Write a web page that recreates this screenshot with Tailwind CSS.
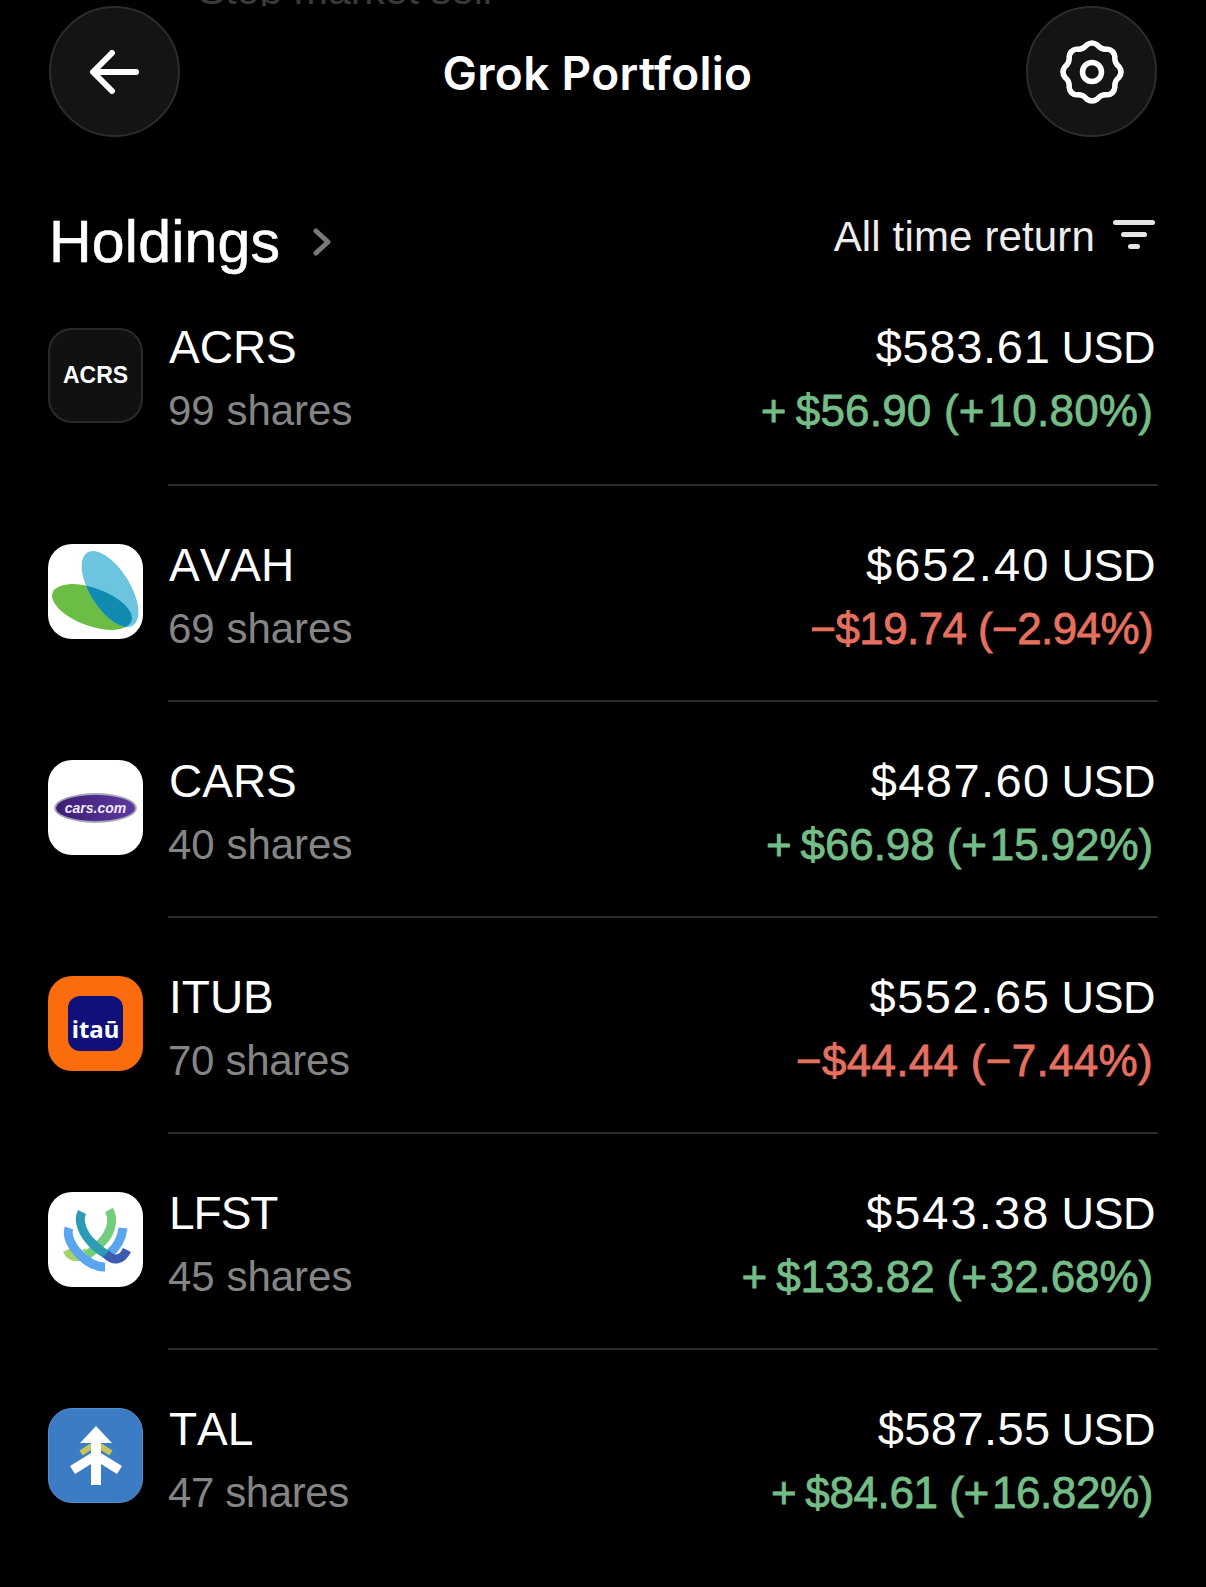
<!DOCTYPE html>
<html lang="en">
<head>
    <meta charset="UTF-8" />
    <title>Grok Portfolio</title>
    <script src="https://cdn.jsdelivr.net/npm/@tailwindcss/browser@4"></script>
</head>
<body class="bg-black text-white font-['Liberation_Sans',sans-serif] w-[1206px] h-[1587px] overflow-hidden">

    <!-- Clipped row from the page behind -->
    <div class="h-[6px] overflow-hidden pl-[198px]">
        <p class="text-[41px] leading-[41px] -mt-[30px] text-[#3a3a3a]">Stop market sell</p>
    </div>

    <!-- Header -->
    <header class="flex items-center justify-between pl-[49px] pr-[49px]">
        <button class="w-[131px] h-[131px] rounded-full bg-[#141414] border-2 border-[#2c2c2c] flex items-center justify-center">
            <svg width="52" height="44" viewBox="0 0 52 44" fill="none" stroke="white" stroke-width="6" stroke-linecap="round" stroke-linejoin="round">
                <path d="M47 22H5M23 3 4 22l19 19"/>
            </svg>
        </button>
        <h1 class="font-['Inter',sans-serif] font-semibold text-[46px] tracking-[0.3px] mr-[11px] mt-[4px]">Grok Portfolio</h1>
        <button class="w-[131px] h-[131px] rounded-full bg-[#141414] border-2 border-[#2c2c2c] flex items-center justify-center">
            <svg width="64" height="64" viewBox="0 0 64 64" fill="none" stroke="white" stroke-width="5.5" stroke-linejoin="round">
                <path d="M26.64 5.03Q32 1 37.36 5.03Q41.19 9.82 47.29 9.15Q53.92 10.08 54.85 16.71Q54.18 22.81 58.97 26.64Q63 32 58.97 37.36Q54.18 41.19 54.85 47.29Q53.92 53.92 47.29 54.85Q41.19 54.18 37.36 58.97Q32 63 26.64 58.97Q22.81 54.18 16.71 54.85Q10.08 53.92 9.15 47.29Q9.82 41.19 5.03 37.36Q1 32 5.03 26.64Q9.82 22.81 9.15 16.71Q10.08 10.08 16.71 9.15Q22.81 9.82 26.64 5.03Z"/>
                <circle cx="32" cy="32" r="9.5"/>
            </svg>
        </button>
    </header>

    <!-- Holdings heading -->
    <section class="flex items-center justify-between pl-[49px] pr-[51px] mt-[69px] h-[72px]">
        <div class="flex items-center gap-[32px]">
            <h2 class="text-[59px] leading-[72px] tracking-[0.2px] [-webkit-text-stroke:0.6px_white]">Holdings</h2>
            <svg width="20" height="30" viewBox="0 0 20 30" fill="none" stroke="#7a7a7a" stroke-width="5" stroke-linecap="round" stroke-linejoin="round">
                <path d="m4 4 12 11L4 26"/>
            </svg>
        </div>
        <div class="flex items-center gap-[18px] -mt-[10px]">
            <span class="text-[42px] leading-[48px] tracking-[0.15px] text-[#ededed]">All time return</span>
            <div class="flex flex-col items-center gap-[7px] w-[42px] -mt-[6px]">
                <span class="w-[42px] h-[5px] rounded-full bg-[#e5e5e5]"></span>
                <span class="w-[26px] h-[5px] rounded-full bg-[#e5e5e5]"></span>
                <span class="w-[12px] h-[5px] rounded-full bg-[#e5e5e5]"></span>
            </div>
        </div>
    </section>

    <!-- Holdings list -->
    <main class="pl-[48px] pr-[48px] mt-[-8px]">

        <div class="flex gap-[25px] h-[216px] pt-[58px]">
            <div class="w-[95px] h-[95px] shrink-0 rounded-[24px] bg-[#111111] border-2 border-[#2a2a2a] flex items-center justify-center">
                <span class="text-[23px] font-bold">ACRS</span>
            </div>
            <div class="flex-1 flex justify-between border-b-2 border-[#2a2a2a] pr-[3px]">
                <div>
                    <p class="text-[46px] leading-[46px] mt-[-4px] ml-[1px]">ACRS</p>
                    <p class="text-[42px] leading-[42px] mt-[20px] text-[#858585]">99 shares</p>
                </div>
                <div class="text-right">
                    <p class="text-[47px] leading-[46px] mt-[-4px]"><span class="tracking-[0.7px]">$583.61</span><span class="text-[45px] tracking-[-0.5px] ml-[11px]">USD</span></p>
                    <p class="text-[44px] leading-[44px] mt-[18px] text-[#74bd86] pr-[2px] tracking-[0.2px] [-webkit-text-stroke:0.8px_#74bd86]">+<span class="ml-[9px]">$56.90 (+</span><span class="ml-[3px]">10.80%)</span></p>
                </div>
            </div>
        </div>

        <div class="flex gap-[25px] h-[216px] pt-[58px]">
            <div class="w-[95px] h-[95px] shrink-0 rounded-[24px] bg-white overflow-hidden">
                <svg width="95" height="95" viewBox="0 0 95 95">
                    <defs>
                        <clipPath id="avah-overlap">
                            <ellipse cx="44" cy="63" rx="42" ry="19" transform="rotate(20 44 63)"/>
                        </clipPath>
                    </defs>
                    <ellipse cx="44" cy="63" rx="42" ry="19" transform="rotate(20 44 63)" fill="#6cbd45"/>
                    <ellipse cx="62" cy="45" rx="43" ry="20" transform="rotate(58 62 45)" fill="#6cc4de"/>
                    <g clip-path="url(#avah-overlap)">
                        <ellipse cx="62" cy="45" rx="43" ry="20" transform="rotate(58 62 45)" fill="#118cb0"/>
                    </g>
                </svg>
            </div>
            <div class="flex-1 flex justify-between border-b-2 border-[#2a2a2a] pr-[3px]">
                <div>
                    <p class="text-[46px] leading-[46px] mt-[-2px] ml-[1px] [font-kerning:none]">AVAH</p>
                    <p class="text-[42px] leading-[42px] mt-[20px] text-[#858585]">69 shares</p>
                </div>
                <div class="text-right">
                    <p class="text-[47px] leading-[46px] mt-[-2px]"><span class="tracking-[2.1px]">$652.40</span><span class="text-[45px] tracking-[-0.5px] ml-[11px]">USD</span></p>
                    <p class="text-[44px] leading-[44px] mt-[18px] text-[#e5705f] pr-[2px] tracking-[-0.6px] [-webkit-text-stroke:0.8px_#e5705f]">−$19.74 (−2.94%)</p>
                </div>
            </div>
        </div>

        <div class="flex gap-[25px] h-[216px] pt-[58px]">
            <div class="w-[95px] h-[95px] shrink-0 rounded-[24px] bg-white flex items-center justify-center">
                <div class="w-[83px] h-[30px] rounded-[50%] bg-linear-to-r from-[#3d1c78] to-[#5c3a9c] border-2 border-[#aaa6b8] flex items-center justify-center">
                    <span class="text-[14px] leading-none font-bold italic text-[#efeaf6]">cars.com</span>
                </div>
            </div>
            <div class="flex-1 flex justify-between border-b-2 border-[#2a2a2a] pr-[3px]">
                <div>
                    <p class="text-[46px] leading-[46px] mt-[-2px] ml-[1px]">CARS</p>
                    <p class="text-[42px] leading-[42px] mt-[20px] text-[#858585]">40 shares</p>
                </div>
                <div class="text-right">
                    <p class="text-[47px] leading-[46px] mt-[-2px]"><span class="tracking-[1.4px]">$487.60</span><span class="text-[45px] tracking-[-0.5px] ml-[11px]">USD</span></p>
                    <p class="text-[44px] leading-[44px] mt-[18px] text-[#74bd86] pr-[2px] tracking-[-0.1px] [-webkit-text-stroke:0.8px_#74bd86]">+<span class="ml-[9px]">$66.98 (+</span><span class="ml-[3px]">15.92%)</span></p>
                </div>
            </div>
        </div>

        <div class="flex gap-[25px] h-[216px] pt-[58px]">
            <div class="w-[95px] h-[95px] shrink-0 rounded-[24px] bg-[#fa6c0c] flex items-center justify-center">
                <div class="w-[55px] h-[55px] rounded-[12px] bg-[#10107a] flex items-center justify-center">
                    <span class="text-[24px] leading-none font-bold text-white font-['Noto_Sans',sans-serif] mt-[10px]">itaū</span>
                </div>
            </div>
            <div class="flex-1 flex justify-between border-b-2 border-[#2a2a2a] pr-[3px]">
                <div>
                    <p class="text-[46px] leading-[46px] mt-[-2px] ml-[1px]">ITUB</p>
                    <p class="text-[42px] leading-[42px] mt-[20px] text-[#858585] tracking-[-0.3px]">70 shares</p>
                </div>
                <div class="text-right">
                    <p class="text-[47px] leading-[46px] mt-[-2px]"><span class="tracking-[1.6px]">$552.65</span><span class="text-[45px] tracking-[-0.5px] ml-[11px]">USD</span></p>
                    <p class="text-[44px] leading-[44px] mt-[18px] text-[#e5705f] pr-[2px] tracking-[0.3px] [-webkit-text-stroke:0.8px_#e5705f]">−$44.44 (−7.44%)</p>
                </div>
            </div>
        </div>

        <div class="flex gap-[25px] h-[216px] pt-[58px]">
            <div class="w-[95px] h-[95px] shrink-0 rounded-[24px] bg-white overflow-hidden">
                <svg width="95" height="95" viewBox="0 0 95 95" fill="none" stroke-width="9">
                    <path d="M19 58C23 66 30 67 40 60" stroke="#a5d36a"/>
                    <path d="M61 18C67 28 62 42 54 50 48 56 44 60 39 63" stroke="#72cd7c"/>
                    <path d="M75 36C74 44 70 54 62 61" stroke="#5aa5ee"/>
                    <path d="M21 36C18 44 24 55 32 63 40 71 48 75 57 75" stroke="#5aa5ee"/>
                    <path d="M34 20C29 30 36 43 44 51 50 57 55 61 60 63" stroke="#2c9cb5"/>
                    <path d="M58 62C66 70 74 68 79 58" stroke="#3c5cb4"/>
                </svg>
            </div>
            <div class="flex-1 flex justify-between border-b-2 border-[#2a2a2a] pr-[3px]">
                <div>
                    <p class="text-[46px] leading-[46px] mt-[-2px] ml-[1px] tracking-[-1px]">LFST</p>
                    <p class="text-[42px] leading-[42px] mt-[20px] text-[#858585]">45 shares</p>
                </div>
                <div class="text-right">
                    <p class="text-[47px] leading-[46px] mt-[-2px]"><span class="tracking-[2.1px]">$543.38</span><span class="text-[45px] tracking-[-0.5px] ml-[11px]">USD</span></p>
                    <p class="text-[44px] leading-[44px] mt-[18px] text-[#74bd86] pr-[2px] tracking-[-0.1px] [-webkit-text-stroke:0.8px_#74bd86]">+<span class="ml-[9px]">$133.82 (+</span><span class="ml-[3px]">32.68%)</span></p>
                </div>
            </div>
        </div>

        <div class="flex gap-[25px] h-[216px] pt-[58px]">
            <div class="w-[95px] h-[95px] shrink-0 rounded-[24px] bg-[#3b7cc4] border border-[#4f8fd0] overflow-hidden">
                <svg width="93" height="93" viewBox="1 1 93 93">
                    <path d="M44 38 33 45M52 38 63 45" stroke="#c9c45a" stroke-width="6" fill="none"/>
                    <path d="M48 18 64 35H32z" fill="white"/>
                    <path d="M48 42 74 58 69 66 53 56V77H43V56L27 66 22 58z" fill="white"/>
                    <path d="M43 34H53V46H43z" fill="white"/>
                </svg>
            </div>
            <div class="flex-1 flex justify-between pr-[3px]">
                <div>
                    <p class="text-[46px] leading-[46px] mt-[-2px] ml-[1px] [font-kerning:none]">TAL</p>
                    <p class="text-[42px] leading-[42px] mt-[20px] text-[#858585] tracking-[-0.4px]">47 shares</p>
                </div>
                <div class="text-right">
                    <p class="text-[47px] leading-[46px] mt-[-2px]"><span class="tracking-[0.4px]">$587.55</span><span class="text-[45px] tracking-[-0.5px] ml-[11px]">USD</span></p>
                    <p class="text-[44px] leading-[44px] mt-[18px] text-[#74bd86] pr-[2px] tracking-[-0.4px] [-webkit-text-stroke:0.8px_#74bd86]">+<span class="ml-[9px]">$84.61 (+</span><span class="ml-[3px]">16.82%)</span></p>
                </div>
            </div>
        </div>

    </main>
</body>
</html>
